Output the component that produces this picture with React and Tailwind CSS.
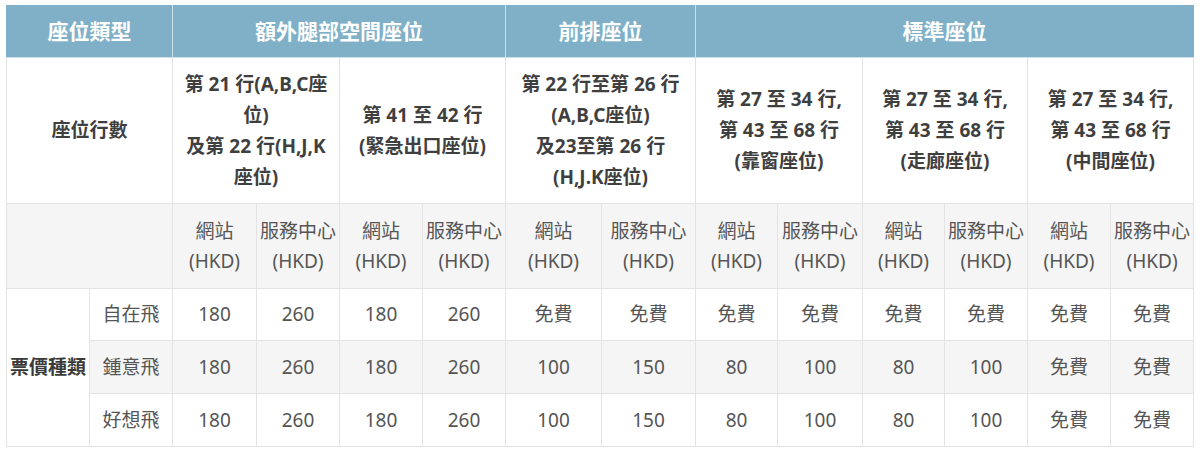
const widths = ['w-[83px]', 'w-[83px]', 'w-[84px]', 'w-[83px]', 'w-[83px]', 'w-[83px]', 'w-[96px]', 'w-[94px]', 'w-[82px]', 'w-[85px]', 'w-[82px]', 'w-[83px]', 'w-[83px]', 'w-[83px]'];

const rowRanges = [
  ['第 21 行(A,B,C座', '位)', '及第 22 行(H,J,K', '座位)'],
  ['第 41 至 42 行', '(緊急出口座位)'],
  ['第 22 行至第 26 行', '(A,B,C座位)', '及23至第 26 行', '(H,J.K座位)'],
  ['第 27 至 34 行,', '第 43 至 68 行', '(靠窗座位)'],
  ['第 27 至 34 行,', '第 43 至 68 行', '(走廊座位)'],
  ['第 27 至 34 行,', '第 43 至 68 行', '(中間座位)'],
];

const fares = [
  { name: '自在飛', prices: ['180', '260', '180', '260', '免費', '免費', '免費', '免費', '免費', '免費', '免費', '免費'] },
  { name: '鍾意飛', prices: ['180', '260', '180', '260', '100', '150', '80', '100', '80', '100', '免費', '免費'], shaded: true },
  { name: '好想飛', prices: ['180', '260', '180', '260', '100', '150', '80', '100', '80', '100', '免費', '免費'] },
];

const cell = 'border border-[#e3e3e3] text-center align-middle';

export default function App() {
  return (
    <div className="bg-white px-[6px] pt-[5px] pb-[10px]" style={{ fontFamily: '"Noto Sans", "Noto Sans CJK TC", sans-serif' }}>
      <table className="table-fixed border-collapse w-[1188px] text-[19px] text-[#555]">
        <colgroup>
          {widths.map((w, i) => (
            <col key={i} className={w} />
          ))}
        </colgroup>
        <thead>
          {/* Seat categories */}
          <tr className="h-[52px] bg-[#80b0c7] text-white text-[21px] font-bold">
            <th colSpan={2} className="border border-[#cfe0e8] border-t-[#80b0c7] border-l-[#80b0c7] font-bold">座位類型</th>
            <th colSpan={4} className="border border-[#cfe0e8] border-t-[#80b0c7] font-bold">額外腿部空間座位</th>
            <th colSpan={2} className="border border-[#cfe0e8] border-t-[#80b0c7] font-bold">前排座位</th>
            <th colSpan={6} className="border border-[#cfe0e8] border-t-[#80b0c7] border-r-[#80b0c7] font-bold">標準座位</th>
          </tr>
        </thead>
        <tbody>
          {/* Seat rows */}
          <tr className="h-[146px] font-bold text-[#3f3f3f] leading-[31px]">
            <td colSpan={2} className={cell}>座位行數</td>
            {rowRanges.map((lines, i) => (
              <td key={i} colSpan={2} className={cell + ' whitespace-nowrap'}>
                {lines.map((l, j) => (
                  <div key={j}>{l}</div>
                ))}
              </td>
            ))}
          </tr>

          {/* Channels */}
          <tr className="h-[85px] bg-[#f5f5f5] leading-[30px]">
            <td colSpan={2} className={cell}></td>
            {Array.from({ length: 6 }).flatMap((_, i) => [
              <td key={i + 'a'} className={cell + ' whitespace-nowrap'}>
                <div>網站</div>
                <div>(HKD)</div>
              </td>,
              <td key={i + 'b'} className={cell + ' whitespace-nowrap'}>
                <div>服務中心</div>
                <div>(HKD)</div>
              </td>,
            ])}
          </tr>

          {/* Fare types */}
          {fares.map((f, r) => (
            <tr key={f.name} className={(r === 0 ? 'h-[52px] ' : 'h-[53px] ') + (f.shaded ? 'bg-[#f5f5f5]' : 'bg-white')}>
              {r === 0 && (
                <td rowSpan={3} className={cell + ' bg-white font-bold text-[#3a3a3a] whitespace-nowrap'}>票價種類</td>
              )}
              <td className={cell}>{f.name}</td>
              {f.prices.map((p, i) => (
                <td key={i} className={cell}>{p}</td>
              ))}
            </tr>
          ))}
        </tbody>
      </table>
    </div>
  );
}
